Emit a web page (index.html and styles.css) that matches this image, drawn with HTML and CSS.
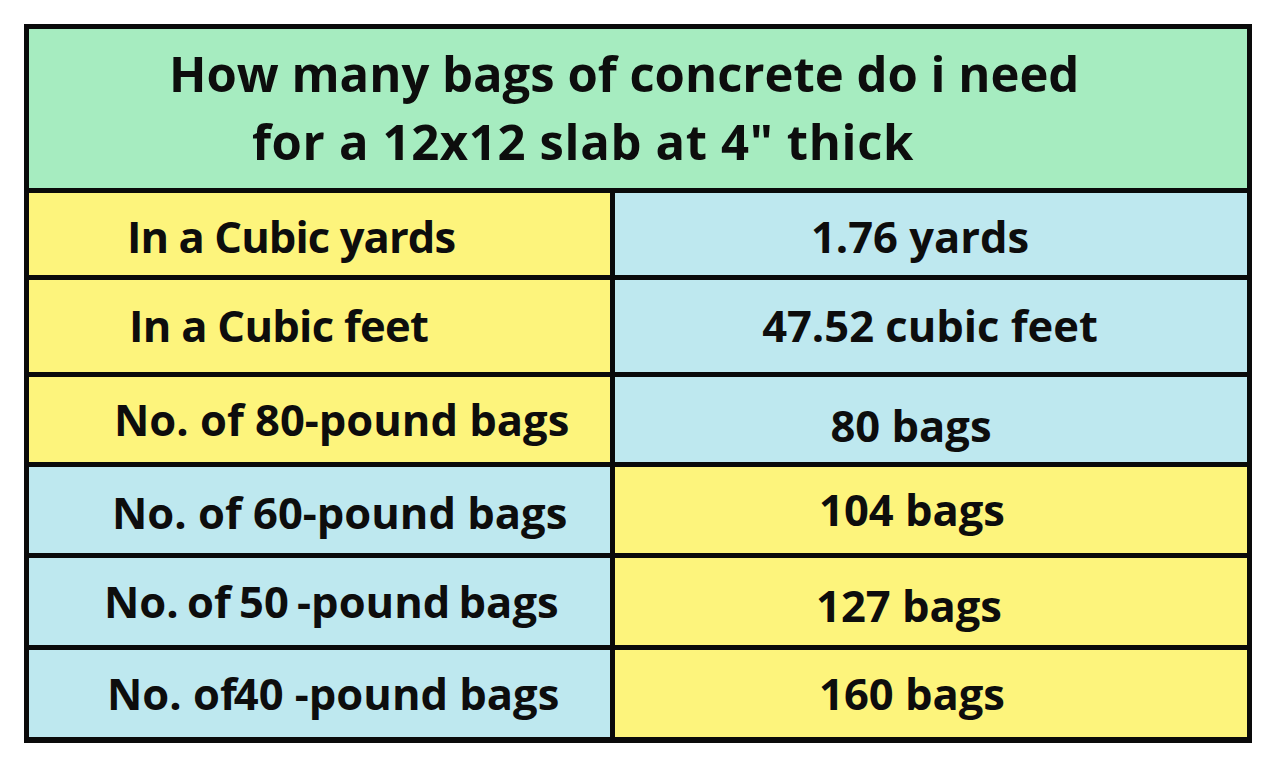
FILE: index.html
```html
<!DOCTYPE html>
<html lang="en">
<head>
<meta charset="utf-8">
<title>How many bags of concrete do i need for a 12x12 slab at 4" thick</title>
<link rel="stylesheet" href="styles.css">
</head>
<body>
<div class="table">
  <div class="cell head">
    <span class="head-line l1">How many bags of concrete do i need</span>
    <span class="head-line l2">for a 12x12 slab at 4" thick</span>
  </div>

  <div class="cell yellow left r1"><span class="txt">In a Cubic yards</span></div>
  <div class="cell blue right r1"><span class="txt">1.76 yards</span></div>

  <div class="cell yellow left r2"><span class="txt">In a Cubic feet</span></div>
  <div class="cell blue right r2"><span class="txt">47.52 cubic feet</span></div>

  <div class="cell yellow left r3"><span class="txt">No. of 80-pound bags</span></div>
  <div class="cell blue right r3"><span class="txt">80 bags</span></div>

  <div class="cell blue left r4"><span class="txt">No. of 60-pound bags</span></div>
  <div class="cell yellow right r4"><span class="txt">104 bags</span></div>

  <div class="cell blue left r5"><span class="txt">No. of 50 -pound bags</span></div>
  <div class="cell yellow right r5"><span class="txt">127 bags</span></div>

  <div class="cell blue left r6"><span class="txt">No. of<span class="tight">40</span> -pound bags</span></div>
  <div class="cell yellow right r6"><span class="txt">160 bags</span></div>
</div>
</body>
</html>
```

FILE: styles.css
```css
html, body {
  margin: 0;
  padding: 0;
  background: #ffffff;
}

body {
  padding: 24px 0 0 24px;
  font-family: "Open Sans", "Lato", sans-serif;
  font-weight: 700;
  color: #0d0d0d;
}

.table {
  display: grid;
  grid-template-columns: 581px 632px;
  grid-template-rows: 159px 82px 92px 85px 86px 87px 87px;
  gap: 5px;
  padding: 5px 5px 6px 5px;
  width: 1218px;
  background: #0a0a0a;
}

.cell {
  display: flex;
  align-items: center;
  font-size: 43.5px;
  line-height: 1;
  white-space: nowrap;
}

.head {
  grid-column: 1 / span 2;
  background: #a6ecc0;
  flex-direction: column;
  align-items: flex-start;
  justify-content: center;
  font-size: 49px;
  gap: 19px;
  padding-bottom: 2px;
}

.head-line.l1 { padding-left: 140px; }
.head-line.l2 { padding-left: 223px; letter-spacing: 0.65px; }

.yellow { background: #fdf47c; }
.blue { background: #bee8ef; }

.left { justify-content: flex-start; }
.right { justify-content: center; padding-right: 40px; }

.left.r1 { padding-left: 98px; padding-top: 6px; letter-spacing: -0.9px; }
.left.r2 { padding-left: 100px; letter-spacing: -0.7px; }
.left.r3 { padding-left: 85px; }
.left.r4 { padding-left: 83px; padding-top: 6px; }
.left.r5 { padding-left: 75px; word-spacing: -3px; }
.left.r6 { padding-left: 78px; }

.right.r1 { padding-top: 6px; padding-right: 22px; }
.right.r2 { padding-right: 2px; }
.right.r3 { padding-top: 12px; }
.right.r4 { padding-right: 38px; }
.right.r5 { padding-top: 8px; padding-right: 44px; }
.right.r6 { padding-right: 38px; }

.tight { margin-left: -3px; }
```
